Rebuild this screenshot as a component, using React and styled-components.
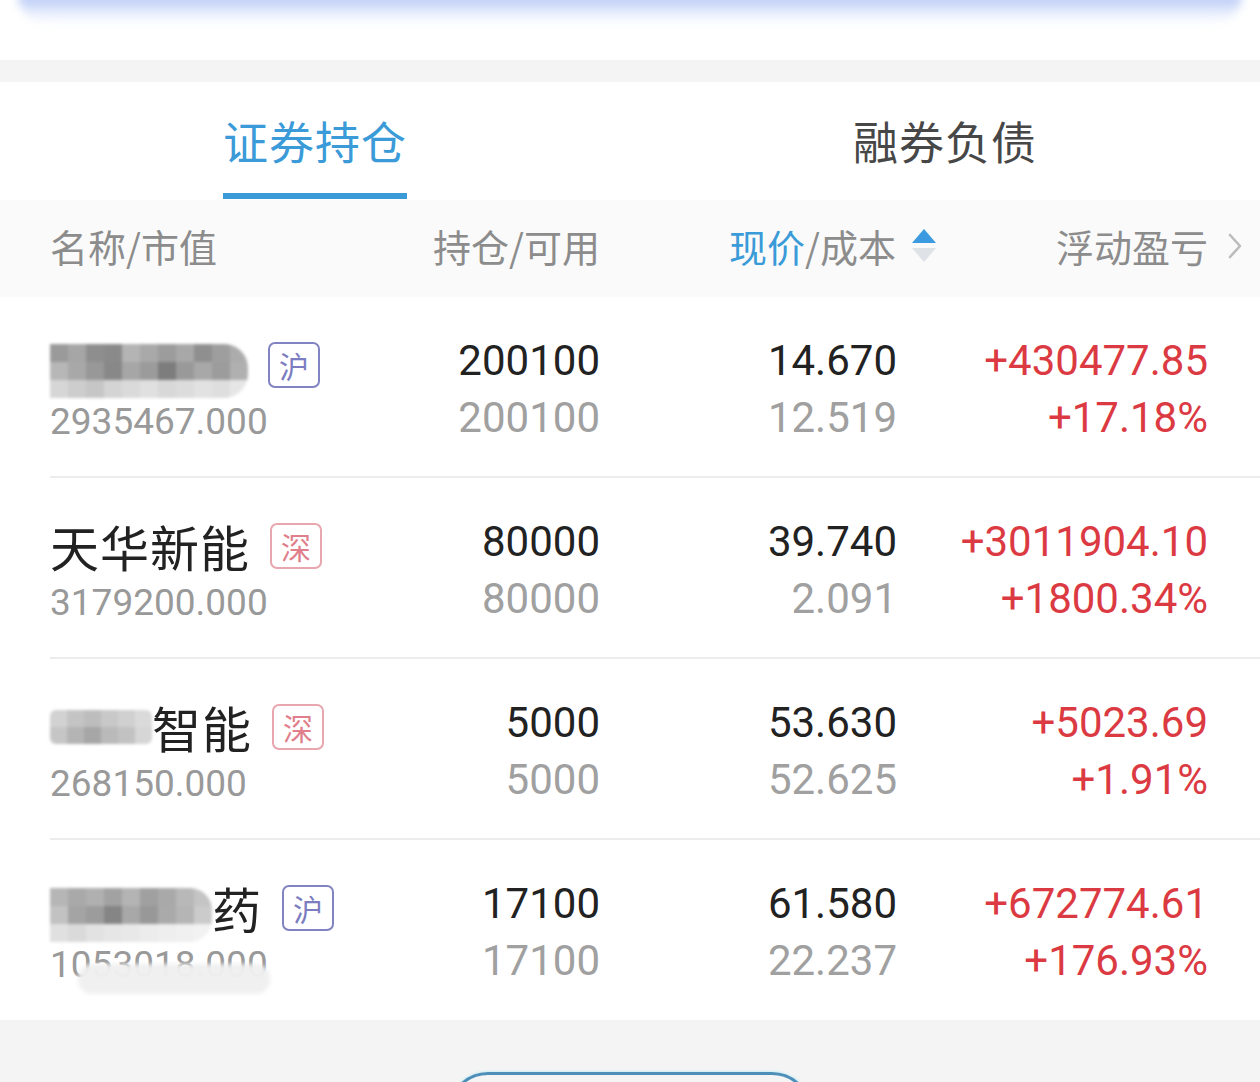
import React from 'react';
import styled, { createGlobalStyle } from 'styled-components';

const GlobalStyle = createGlobalStyle`
  html, body { margin: 0; padding: 0; background: #ffffff; }
  body {
    font-family: "Noto Sans CJK SC", "Noto Sans", sans-serif;
    overflow: hidden;
    -webkit-font-smoothing: antialiased;
  }
`;

const Page = styled.div`
  width: 1260px;
  height: 1082px;
  overflow: hidden;
  display: flex;
  flex-direction: column;
  background: #ffffff;
  & > * { flex-shrink: 0; }
`;

const TopArea = styled.div`
  height: 60px;
  background: #ffffff;
  display: flex;
  flex-direction: column;
  overflow: hidden;
`;

const TopGlow = styled.div`
  height: 30px;
  margin: -6px 18px 0;
  border-radius: 0 0 40px 40px;
  background: linear-gradient(180deg, #aebff3 0%, #c9d6f8 30%, #e6edfc 60%, #ffffff 100%);
  filter: blur(5px);
`;

const GrayBand = styled.div`
  height: 22px;
  background: #f4f4f4;
`;

const TabBar = styled.div`
  height: 118px;
  display: flex;
  background: #ffffff;
`;

const TabItem = styled.div`
  flex: 1;
  display: flex;
  justify-content: center;
  align-items: flex-end;
`;

const TabLabel = styled.div`
  font-size: 45px;
  line-height: 60px;
  padding-bottom: 22px;
  margin-bottom: 1px;
  letter-spacing: 1px;
  color: ${p => (p.$active ? '#3b9ad8' : '#474747')};
  border-bottom: 6px solid ${p => (p.$active ? '#3b9ad8' : 'transparent')};
`;

const HeaderRow = styled.div`
  height: 97px;
  box-sizing: border-box;
  padding: 0 0 6px 50px;
  background: #fafafa;
  display: grid;
  grid-template-columns: 330px 220px 337px 305px;
  align-items: center;
`;

const HeadCell = styled.div`
  display: flex;
  align-items: center;
  justify-content: ${p => (p.$left ? 'flex-start' : 'flex-end')};
  font-size: 38px;
  line-height: 50px;
  color: #8c8c8c;
  gap: ${p => p.$gap || 0}px;
`;

const HeadBlue = styled.span`
  color: #3b9ad8;
`;

const List = styled.div`
  background: #ffffff;
  display: flex;
  flex-direction: column;
`;

const Row = styled.div`
  margin-left: 50px;
  height: ${p => (p.$last ? 180 : 181)}px;
  box-sizing: border-box;
  padding: 35px 0 0;
  display: grid;
  grid-template-columns: 330px 220px 297px 311px;
  align-content: start;
  border-bottom: ${p => (p.$last ? 'none' : '2px solid #ececec')};
`;

const Cell = styled.div`
  display: flex;
  flex-direction: column;
  align-items: ${p => (p.$left ? 'flex-start' : 'flex-end')};
  padding-top: ${p => (p.$left ? 4 : 0)}px;
`;

const Line = styled.div`
  height: 57px;
  display: flex;
  align-items: center;
  white-space: nowrap;
`;

const NameText = styled.span`
  font-size: 49px;
  line-height: 57px;
  letter-spacing: 1px;
  color: #222222;
`;

const Badge = styled.span`
  margin-left: 20px;
  width: 52px;
  height: 46px;
  box-sizing: border-box;
  border: 2px solid ${p => (p.$sh ? '#8183c2' : '#e8a6ae')};
  color: ${p => (p.$sh ? '#7b7dc0' : '#e07e8b')};
  border-radius: 7px;
  font-size: 30px;
  line-height: 42px;
  display: inline-flex;
  align-items: center;
  justify-content: center;
`;

const Num = styled.span`
  font-family: Roboto, "Liberation Sans", sans-serif;
  font-size: ${p => p.$size || 42}px;
  line-height: 57px;
  color: ${p => p.$color};
  position: relative;
`;

const MosaicGrid = styled.span`
  display: inline-grid;
  grid-template-columns: repeat(${p => p.$cols}, ${p => p.$cell}px);
  grid-auto-rows: ${p => p.$cell}px;
  filter: blur(1.6px);
  border-radius: ${p => p.$radius || '0 24px 24px 0'};
  overflow: hidden;
  margin-top: ${p => p.$shift || 0}px;
`;

const MosaicCell = styled.span`
  background: ${p => p.$c};
`;

const ValueVeil = styled.span`
  position: absolute;
  left: 28px;
  top: 28px;
  width: 192px;
  height: 30px;
  border-radius: 14px;
  background: rgba(240, 240, 240, 0.97);
  filter: blur(2px);
`;

const Footer = styled.div`
  height: 140px;
  background: #f4f4f4;
  display: flex;
  justify-content: center;
  align-items: flex-start;
`;

const OutlineButton = styled.div`
  margin-top: 52px;
  width: 364px;
  height: 90px;
  box-sizing: border-box;
  border: 3px solid #4d8fb8;
  border-radius: 40px;
  box-shadow: 0 0 3px #9fe6f5;
`;

function Mosaic({ shades, cols, cell = 18, radius, shift }) {
  return (
    <MosaicGrid $cols={cols} $cell={cell} $radius={radius} $shift={shift}>
      {shades.map((c, i) => (
        <MosaicCell key={i} $c={c} />
      ))}
    </MosaicGrid>
  );
}

const mosaic1 = [
  '#9a9a9a', '#a6a6a6', '#8e8e8e', '#8a8a8a', '#b4b4b4', '#a9a9a9', '#9c9c9c', '#a8a8a8', '#8f8f8f', '#9e9e9e', '#acacac',
  '#b7b7b7', '#a8a8a8', '#989898', '#888888', '#a6a6a6', '#9b9b9b', '#7d7d7d', '#999999', '#a8a8a8', '#9c9c9c', '#b0b0b0',
  '#d6d6d6', '#cdcdcd', '#c6c6c6', '#d4d4d4', '#dadada', '#e0e0e0', '#d8d8d8', '#dcdcdc', '#e2e2e2', '#dedede', '#e6e6e6',
];

const mosaic3 = [
  '#d2d2d2', '#c4c4c4', '#bdbdbd', '#c8c8c8', '#d0d0d0', '#dadada',
  '#c6c6c6', '#b4b4b4', '#a6a6a6', '#bababa', '#c2c2c2', '#d6d6d6',
];

const mosaic4 = [
  '#b6b6b6', '#a9a9a9', '#b0b0b0', '#a2a2a2', '#b4b4b4', '#a0a0a0', '#a9a9a9', '#b8b8b8', '#c4c4c4',
  '#c2c2c2', '#a4a4a4', '#9c9c9c', '#858585', '#a8a8a8', '#989898', '#aaaaaa', '#b5b5b5', '#cbcbcb',
  '#e0e0e0', '#dadada', '#e2e2e2', '#e6e6e6', '#e8e8e8', '#ececec', '#eeeeee', '#f0f0f0', '#f2f2f2',
];

const rows = [
  {
    mosaic: <Mosaic shades={mosaic1} cols={11} shift={12} />,
    name: '',
    sh: true,
    value: '2935467.000',
    qty: '200100', avail: '200100',
    price: '14.670', cost: '12.519',
    pl: '+430477.85', pct: '+17.18%',
  },
  {
    name: '天华新能',
    sh: false,
    value: '3179200.000',
    qty: '80000', avail: '80000',
    price: '39.740', cost: '2.091',
    pl: '+3011904.10', pct: '+1800.34%',
  },
  {
    mosaic: <Mosaic shades={mosaic3} cols={6} cell={17} radius="6px" />,
    name: '智能',
    sh: false,
    value: '268150.000',
    qty: '5000', avail: '5000',
    price: '53.630', cost: '52.625',
    pl: '+5023.69', pct: '+1.91%',
  },
  {
    mosaic: <Mosaic shades={mosaic4} cols={9} shift={14} radius="0 22px 22px 0" />,
    name: '药',
    sh: true,
    value: '1053018.000',
    veil: true,
    qty: '17100', avail: '17100',
    price: '61.580', cost: '22.237',
    pl: '+672774.61', pct: '+176.93%',
  },
];

const SortIcon = () => (
  <svg width="26" height="36" viewBox="0 0 26 36">
    <path d="M13 1 L25 15 L1 15 Z" fill="#3b9ae0" />
    <path d="M1 20 L25 20 L13 34 Z" fill="#dfe2e6" />
  </svg>
);

const Chevron = () => (
  <svg width="14" height="26" viewBox="0 0 14 26">
    <path d="M2 2 L12 13 L2 24" fill="none" stroke="#bcbcbc" strokeWidth="2.6" strokeLinecap="round" strokeLinejoin="round" />
  </svg>
);

export default function App() {
  return (
    <Page>
      <GlobalStyle />
      <TopArea>
        <TopGlow />
      </TopArea>
      <GrayBand />
      <TabBar>
        <TabItem>
          <TabLabel $active>证券持仓</TabLabel>
        </TabItem>
        <TabItem>
          <TabLabel>融券负债</TabLabel>
        </TabItem>
      </TabBar>
      <HeaderRow>
        <HeadCell $left>名称/市值</HeadCell>
        <HeadCell>持仓/可用</HeadCell>
        <HeadCell $gap={15}>
          <span>
            <HeadBlue>现价</HeadBlue>/成本
          </span>
          <SortIcon />
        </HeadCell>
        <HeadCell $gap={20}>
          <span>浮动盈亏</span>
          <Chevron />
        </HeadCell>
      </HeaderRow>
      <List>
        {rows.map((r, i) => (
          <Row key={i} $last={i === rows.length - 1}>
            <Cell $left>
              <Line>
                {r.mosaic}
                {r.name && <NameText>{r.name}</NameText>}
                <Badge $sh={r.sh}>{r.sh ? '沪' : '深'}</Badge>
              </Line>
              <Line>
                <Num $size={37} $color="#999999">
                  {r.value}
                  {r.veil && <ValueVeil />}
                </Num>
              </Line>
            </Cell>
            <Cell>
              <Line><Num $color="#222222">{r.qty}</Num></Line>
              <Line><Num $color="#a0a0a0">{r.avail}</Num></Line>
            </Cell>
            <Cell>
              <Line><Num $color="#222222">{r.price}</Num></Line>
              <Line><Num $color="#a0a0a0">{r.cost}</Num></Line>
            </Cell>
            <Cell>
              <Line><Num $color="#dc3a42">{r.pl}</Num></Line>
              <Line><Num $color="#dc3a42">{r.pct}</Num></Line>
            </Cell>
          </Row>
        ))}
      </List>
      <Footer>
        <OutlineButton />
      </Footer>
    </Page>
  );
}
